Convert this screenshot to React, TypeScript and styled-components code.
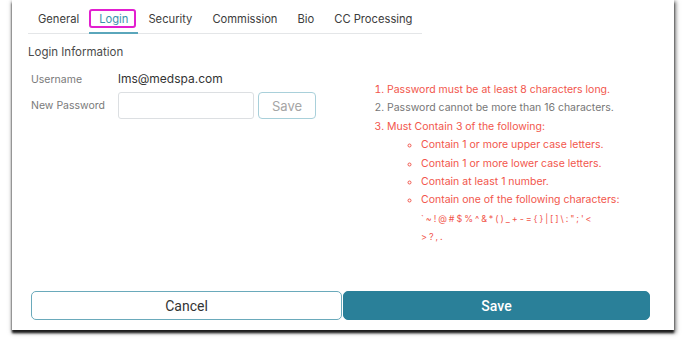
import React from "react";
import styled, { createGlobalStyle } from "styled-components";

const GlobalStyle = createGlobalStyle`
  html, body {
    margin: 0;
    padding: 0;
    background: #fff;
    font-family: Inter, "Noto Sans", sans-serif;
  }
`;

const tabs = ["General", "Login", "Security", "Commission", "Bio", "CC Processing"];

const subRules = [
  "Contain 1 or more upper case letters.",
  "Contain 1 or more lower case letters.",
  "Contain at least 1 number.",
];

export default function App() {
  return (
    <>
      <GlobalStyle />
      <Page>
        <Panel>
          <TabBar>
            {tabs.map((tab) => (
              <Tab key={tab} $active={tab === "Login"}>
                {tab}
              </Tab>
            ))}
          </TabBar>

          <SectionTitle>Login Information</SectionTitle>

          <Body>
            <Form>
              <Label>Username</Label>
              <Value>lms@medspa.com</Value>
              <Label>New Password</Label>
              <InputRow>
                <PasswordInput type="password" />
                <SmallButton disabled>Save</SmallButton>
              </InputRow>
            </Form>

            <Rules>
              <Rule $ok={false}>Password must be at least 8 characters long.</Rule>
              <Rule $ok>Password cannot be more than 16 characters.</Rule>
              <Rule $ok={false}>
                Must Contain 3 of the following:
                <SubRules>
                  {subRules.map((r) => (
                    <SubRule key={r}>{r}</SubRule>
                  ))}
                  <SubRule>
                    Contain one of the following characters:
                    <Chars>
                      {"` ~ ! @ # $ % ^ & * ( ) _ + - = { } | [ ] \\ : \" ; ' <"}
                      <br />
                      {"> ? , ."}
                    </Chars>
                  </SubRule>
                </SubRules>
              </Rule>
            </Rules>
          </Body>

          <Footer>
            <CancelButton>Cancel</CancelButton>
            <SaveButton>Save</SaveButton>
          </Footer>
        </Panel>
      </Page>
    </>
  );
}

const Page = styled("div")`
  width: 688px;
  height: 356px;
  padding-left: 12px;
  box-sizing: border-box;
  overflow: hidden;
`;

const Panel = styled("div")`
  width: 662px;
  height: 330px;
  box-sizing: border-box;
  background: #fff;
  padding: 0 24px 10px 16px;
  display: flex;
  flex-direction: column;
  box-shadow: 1px 2px 4px 1px rgba(0, 0, 0, 0.5), 0 3px 2px rgba(0, 0, 0, 0.8);
`;

const TabBar = styled("div")`
  display: flex;
  align-self: flex-start;
  padding-top: 10px;
  border-bottom: 1px solid #e4e6e8;
`;

type TabProps = { $active: boolean };
const Tab = styled("div")<TabProps>`
  position: relative;
  padding: 2px 10px 6px;
  font-size: 11.2px;
  line-height: 14px;
  color: ${({ $active }) => ($active ? "#3a92ab" : "#3c3c3c")};
  border-bottom: 2px solid ${({ $active }) => ($active ? "#5aa6bb" : "transparent")};
  margin-bottom: -1px;

  &::after {
    content: "";
    display: ${({ $active }) => ($active ? "block" : "none")};
    position: absolute;
    left: 0;
    right: 2px;
    top: -1px;
    bottom: 4px;
    border: 2.5px solid #e21fcf;
    border-radius: 3px;
  }
`;

const SectionTitle = styled("div")`
  margin-top: 11px;
  font-size: 11.5px;
  line-height: 14px;
  color: #4a4a4a;
`;

const Body = styled("div")`
  display: flex;
  margin-top: 12px;
`;

const Form = styled("div")`
  width: 346px;
  padding-left: 3px;
  display: grid;
  grid-template-columns: 87px auto;
  grid-auto-rows: min-content;
  row-gap: 5px;
  align-items: center;
`;

const Label = styled("div")`
  font-size: 10.5px;
  color: #7a7a7a;
`;

const Value = styled("div")`
  font-size: 12px;
  line-height: 16px;
  color: #333;
`;

const InputRow = styled("div")`
  display: flex;
  gap: 4px;
`;

const PasswordInput = styled("input")`
  width: 136px;
  height: 27px;
  box-sizing: border-box;
  border: 1px solid #dcdfe2;
  border-radius: 3px;
  outline: none;
`;

const SmallButton = styled("button")`
  width: 58px;
  height: 27px;
  box-sizing: border-box;
  background: #fff;
  border: 1px solid #a9d0da;
  border-radius: 4px;
  color: #a5a5a5;
  font-family: Inter, sans-serif;
  font-size: 13px;
`;

const Rules = styled("ol")`
  margin: 0;
  padding: 10px 0 0 10px;
  font-size: 10.5px;
  line-height: 18.4px;
`;

type RuleProps = { $ok: boolean };
const Rule = styled("li")<RuleProps>`
  color: ${({ $ok }) => ($ok ? "#777" : "#f2564c")};
`;

const SubRules = styled("ul")`
  margin: 0;
  padding-left: 34px;
  list-style-type: circle;
`;

const SubRule = styled("li")`
  color: #f2564c;
`;

const Chars = styled("div")`
  white-space: pre;
  font-size: 9px;
  letter-spacing: -0.3px;
`;

const Footer = styled("div")`
  margin-top: auto;
  padding-left: 3px;
  display: grid;
  grid-template-columns: 311px 1fr;
  gap: 1px;
`;

const BaseButton = styled("button")`
  height: 29px;
  box-sizing: border-box;
  border-radius: 5px;
  font-family: Roboto, sans-serif;
  font-size: 14px;
`;

const CancelButton = styled(BaseButton)`
  background: #fff;
  border: 1px solid #6aaabb;
  color: #333;
`;

const SaveButton = styled(BaseButton)`
  background: #2a8099;
  border: 1px solid #2a8099;
  color: #fff;
  font-weight: 500;
`;
